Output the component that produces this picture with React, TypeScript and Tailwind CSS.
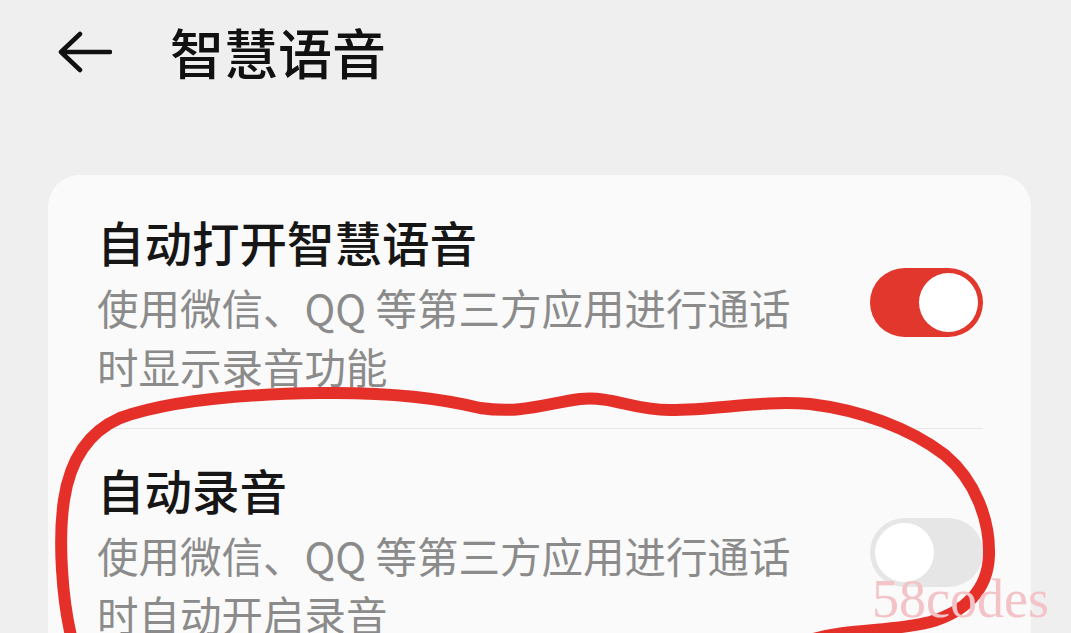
import React from "react";

const cjk = { fontFamily: '"Noto Sans CJK SC", "Noto Sans", sans-serif' };

const Toggle = ({ on, className }: { on: boolean; className: string }) => (
  <div
    className={`relative w-[113px] h-[69px] rounded-full shrink-0 ${
      on ? "bg-[#e2372c]" : "bg-[#e6e6e6]"
    } ${className}`}
  >
    <div
      className={`absolute top-[5px] w-[59px] h-[59px] rounded-full bg-white ${
        on ? "right-[5px]" : "left-[5px]"
      }`}
    />
  </div>
);

const SettingRow = ({
  title,
  lines,
  on,
  className,
  toggleClass,
}: {
  title: string;
  lines: string[];
  on: boolean;
  className: string;
  toggleClass: string;
}) => (
  <div className={`flex items-start justify-between ${className}`}>
    <div className="flex flex-col">
      <div className="text-[47.5px] leading-[56px] font-medium text-[#161616]">{title}</div>
      <div className="mt-[8px] text-[41.5px] leading-[59px] text-[#8b8b8b]">
        {lines.map((l) => (
          <div key={l} className="whitespace-nowrap">
            {l}
          </div>
        ))}
      </div>
    </div>
    <Toggle on={on} className={toggleClass} />
  </div>
);

export default function App() {
  return (
    <div className="relative w-[1071px] h-[633px] overflow-hidden bg-[#efefef]" style={cjk}>
      {/* Header */}
      <div className="flex items-center h-[104px] pl-[58px]">
        <svg width="54" height="42" viewBox="0 0 54 42" className="shrink-0">
          <path
            d="M52 21 H4 M22 3 L3 21 L22 39"
            fill="none"
            stroke="#111"
            strokeWidth="4.5"
            strokeLinecap="round"
            strokeLinejoin="round"
          />
        </svg>
        <div className="ml-[58px] text-[54px] leading-none font-medium text-[#111]">智慧语音</div>
      </div>

      {/* Card */}
      <div className="mt-[71px] ml-[48px] w-[983px] rounded-[32px] bg-[#fafafa] pl-[49px] pr-[48px]">
        <SettingRow
          title="自动打开智慧语音"
          lines={["使用微信、QQ 等第三方应用进行通话", "时显示录音功能"]}
          on
          className="pt-[39px] pb-[32px] border-b border-[#e6e6e6]"
          toggleClass="mt-[54px]"
        />
        <SettingRow
          title="自动录音"
          lines={["使用微信、QQ 等第三方应用进行通话", "时自动开启录音"]}
          on={false}
          className="pt-[33px] pb-[26px]"
          toggleClass="mt-[56px]"
        />
      </div>

      {/* hand-drawn red circle */}
      <svg className="absolute inset-0 pointer-events-none" width="1071" height="633" viewBox="0 0 1071 633">
        <path
          d="M72 640 C62 600 58 540 64 500 C70 460 88 432 120 418 C170 400 250 394 320 393 C390 392 440 398 480 408 C520 414 545 404 580 399 C615 396 630 410 670 410 C720 410 760 400 810 404 C860 410 910 428 945 455 C975 480 990 520 989 555 C988 590 965 612 930 622 C890 632 850 628 810 640"
          fill="none"
          stroke="#e5302a"
          strokeWidth="12"
          strokeLinecap="round"
          strokeLinejoin="round"
        />
      </svg>

      {/* watermark */}
      <div
        className="absolute left-[872px] top-[572px] text-[54px] leading-none text-[#f3c3c7] pointer-events-none"
        style={{ fontFamily: '"Liberation Serif", serif' }}
      >
        58codes
      </div>
    </div>
  );
}
